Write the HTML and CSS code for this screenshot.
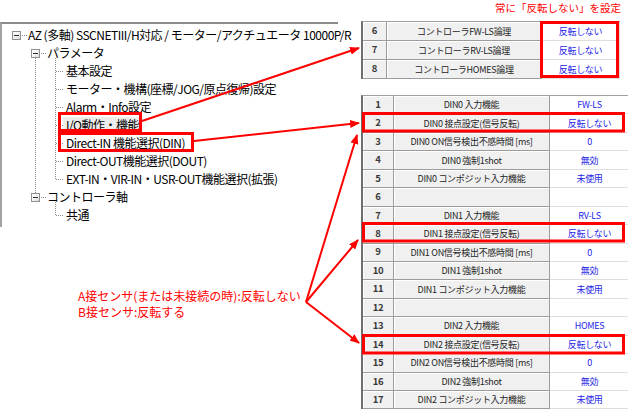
FILE: index.html
```html
<!DOCTYPE html>
<html lang="ja">
<head>
<meta charset="utf-8">
<link rel="stylesheet" href="styles.css">
</head>
<body>
<div class="page">
  <div class="left">
    <div class="tree">
      <div class="node l0"><span class="box"></span><span class="dots d0"></span><span class="label">AZ (多軸) SSCNETIII/H対応 / モーター/アクチュエータ 10000P/R</span></div>
      <div class="group g1">
        <div class="node l1"><span class="box"></span><span class="dots d1"></span><span class="label">パラメータ</span></div>
        <div class="group g2">
          <div class="node l2"><span class="dots d2"></span><span class="label">基本設定</span></div>
          <div class="node l2"><span class="dots d2"></span><span class="label">モーター・機構(座標/JOG/原点復帰)設定</span></div>
          <div class="node l2"><span class="dots d2"></span><span class="label">Alarm・Info設定</span></div>
          <div class="node l2"><span class="dots d2"></span><span class="label selected">I/O動作・機能</span></div>
          <div class="node l2"><span class="dots d2"></span><span class="label">Direct-IN 機能選択(DIN)</span></div>
          <div class="node l2"><span class="dots d2"></span><span class="label">Direct-OUT機能選択(DOUT)</span></div>
          <div class="node l2"><span class="dots d2"></span><span class="label">EXT-IN・VIR-IN・USR-OUT機能選択(拡張)</span></div>
        </div>
        <div class="node l1"><span class="box"></span><span class="dots d1"></span><span class="label">コントローラ軸</span></div>
        <div class="group g2">
          <div class="node l2"><span class="dots d2"></span><span class="label">共通</span></div>
        </div>
      </div>
    </div>
    <p class="note">A接センサ(または未接続の時):反転しない<br>B接センサ:反転する</p>
  </div>

  <div class="right">
    <p class="caption">常に「反転しない」を設定</p>
    <table class="grid small">
      <colgroup><col class="c-num"><col class="c-name"><col class="c-val"></colgroup>
      <tr><td class="num">6</td><td class="name">コントローラFW-LS論理</td><td class="val">反転しない</td></tr>
      <tr><td class="num">7</td><td class="name">コントローラRV-LS論理</td><td class="val">反転しない</td></tr>
      <tr><td class="num">8</td><td class="name">コントローラHOMES論理</td><td class="val">反転しない</td></tr>
    </table>
    <table class="grid big">
      <colgroup><col class="c-num"><col class="c-name"><col class="c-val"></colgroup>
      <tr><td class="num">1</td><td class="name">DIN0 入力機能</td><td class="val">FW-LS</td></tr>
      <tr><td class="num">2</td><td class="name">DIN0 接点設定(信号反転)</td><td class="val">反転しない</td></tr>
      <tr><td class="num">3</td><td class="name">DIN0 ON信号検出不感時間 [ms]</td><td class="val">0</td></tr>
      <tr><td class="num">4</td><td class="name">DIN0 強制1shot</td><td class="val">無効</td></tr>
      <tr><td class="num">5</td><td class="name">DIN0 コンポジット入力機能</td><td class="val">未使用</td></tr>
      <tr><td class="num">6</td><td class="name"></td><td class="val"></td></tr>
      <tr><td class="num">7</td><td class="name">DIN1 入力機能</td><td class="val">RV-LS</td></tr>
      <tr><td class="num">8</td><td class="name">DIN1 接点設定(信号反転)</td><td class="val">反転しない</td></tr>
      <tr><td class="num">9</td><td class="name">DIN1 ON信号検出不感時間 [ms]</td><td class="val">0</td></tr>
      <tr><td class="num">10</td><td class="name">DIN1 強制1shot</td><td class="val">無効</td></tr>
      <tr><td class="num">11</td><td class="name">DIN1 コンポジット入力機能</td><td class="val">未使用</td></tr>
      <tr><td class="num">12</td><td class="name"></td><td class="val"></td></tr>
      <tr><td class="num">13</td><td class="name">DIN2 入力機能</td><td class="val">HOMES</td></tr>
      <tr><td class="num">14</td><td class="name">DIN2 接点設定(信号反転)</td><td class="val">反転しない</td></tr>
      <tr><td class="num">15</td><td class="name">DIN2 ON信号検出不感時間 [ms]</td><td class="val">0</td></tr>
      <tr><td class="num">16</td><td class="name">DIN2 強制1shot</td><td class="val">無効</td></tr>
      <tr><td class="num">17</td><td class="name">DIN2 コンポジット入力機能</td><td class="val">未使用</td></tr>
    </table>
  </div>

  <svg class="overlay" width="628" height="409" viewBox="0 0 628 409">
    <defs>
      <marker id="ah" markerWidth="10" markerHeight="8" refX="9" refY="4" orient="auto" markerUnits="userSpaceOnUse">
        <path d="M0,0 L10,4 L0,8 z" fill="#ff0000"/>
      </marker>
    </defs>
    <g fill="none" stroke="#ff0000" stroke-width="3">
      <rect x="59.5" y="113.5" width="81" height="17"/>
      <rect x="59.5" y="133.5" width="133" height="17"/>
      <rect x="541.5" y="22.5" width="76" height="54"/>
      <rect x="363.5" y="113.5" width="260" height="17.5"/>
      <rect x="363.5" y="223.5" width="260" height="17.5"/>
      <rect x="363.5" y="335.5" width="260" height="17.5"/>
    </g>
    <g stroke="#ff0000" stroke-width="2" marker-end="url(#ah)">
      <line x1="142" y1="121" x2="359" y2="48"/>
      <line x1="194" y1="141" x2="359" y2="123"/>
      <line x1="306" y1="302" x2="357" y2="135"/>
      <line x1="306" y1="302" x2="358" y2="240"/>
      <line x1="306" y1="302" x2="359" y2="343"/>
    </g>
  </svg>
</div>
</body>
</html>
```

FILE: styles.css
```css
html, body {
  margin: 0;
  padding: 0;
  background: #ffffff;
}

.page {
  position: relative;
  display: flex;
  width: 628px;
  height: 409px;
  overflow: hidden;
  font-family: "Noto Sans CJK JP", "Noto Sans", sans-serif;
  color: #000;
}

.left {
  width: 361px;
  flex: none;
}

.right {
  flex: 1;
}

/* ---------- tree ---------- */
.tree {
  margin-top: 22px;
  width: 338px;
  height: 205px;
  box-sizing: border-box;
  border-top: 2px solid #8c8c8c;
  border-left: 2px solid #a3a3a3;
  padding-top: 2px;
  font-size: 12px;
  letter-spacing: -0.5px;
  white-space: nowrap;
}

.node {
  display: flex;
  align-items: center;
  height: 18px;
}

.group {
  position: relative;
}

.g1::before {
  content: "";
  position: absolute;
  left: 33px;
  top: 9px;
  bottom: 27px;
  border-left: 1px dotted #8a8a8a;
}

.g2::before {
  content: "";
  position: absolute;
  left: 53px;
  top: -4px;
  bottom: 9px;
  border-left: 1px dotted #8a8a8a;
}

.box {
  position: relative;
  z-index: 1;
  width: 9px;
  height: 9px;
  box-sizing: border-box;
  border: 1px solid #919191;
  background: linear-gradient(135deg, #ffffff 0%, #f4f4f4 50%, #d8d8d8 100%);
  flex: none;
}

.box::after {
  content: "";
  position: absolute;
  left: 1px;
  top: 3px;
  width: 5px;
  height: 1px;
  background: #2e2e2e;
}

.l0 .box { margin-left: 10px; }
.l1 .box { margin-left: 29px; }

.dots {
  height: 0;
  border-top: 1px dotted #8a8a8a;
  flex: none;
}

.d0 { width: 5px; margin-left: 1px; }
.d1 { width: 5px; margin-left: 1px; }
.d2 { width: 7px; margin-left: 54px; }

.label {
  padding: 0 1px;
  line-height: 16px;
}

.l2 .label {
  padding: 0 3px;
}

.label.selected {
  background: #ececec;
}

.note {
  margin: 61px 0 0 78px;
  font-size: 12px;
  line-height: 16px;
  color: #ff0000;
  white-space: nowrap;
}

/* ---------- tables ---------- */
.caption {
  margin: 0;
  height: 21px;
  line-height: 16px;
  padding-right: 9px;
  text-align: right;
  font-size: 10.5px;
  color: #ff0000;
  white-space: nowrap;
}

.grid {
  border-collapse: separate;
  border-spacing: 0;
  table-layout: fixed;
  border-left: 2px solid #6e6e6e;
  border-top: 1px solid #a0a0a0;
  font-size: 9px;
  letter-spacing: -0.3px;
  line-height: 1;
}

.grid td {
  padding: 0;
  text-align: center;
  white-space: nowrap;
  overflow: hidden;
}

.grid .num,
.grid .name {
  background: #f0f0f0;
  border-right: 1px solid #9c9c9c;
  border-bottom: 1px solid #9c9c9c;
  box-shadow: inset 1px 1px 0 #ffffff;
  color: #1e1e1e;
}

.grid .num {
  font-size: 9.5px;
  color: #3a3a3a;
  font-weight: bold;
}

.grid .val {
  background: #ffffff;
  border-right: 1px solid #dcdcdc;
  border-bottom: 1px solid #dedede;
  color: #2424e8;
}

.small {
  width: 257px;
}

.small tr {
  height: 19px;
}

.small .c-num { width: 24px; }
.small .c-name { width: 155px; }
.small .c-val { width: 78px; }

.big {
  margin-top: 16px;
  width: 267px;
}

.big tr {
  height: 18.45px;
}

.big .c-num { width: 31px; }
.big .c-name { width: 156px; }
.big .c-val { width: 80px; }

.overlay {
  position: absolute;
  left: 0;
  top: 0;
  pointer-events: none;
}
```
